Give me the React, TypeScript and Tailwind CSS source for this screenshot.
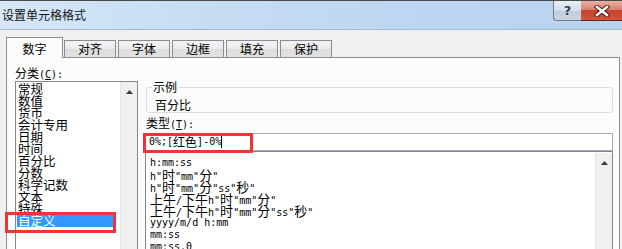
import React from "react";

const isCJK = (c: string) => /[\u2E80-\u9FFF\uFF00-\uFFEF\u3000-\u303F]/.test(c);

function Mixed({ text, cjk }: { text: string; cjk: string }) {
  const parts: { t: string; c: boolean }[] = [];
  for (const ch of Array.from(text)) {
    const c = isCJK(ch);
    const last = parts[parts.length - 1];
    if (last && last.c === c) last.t += ch;
    else parts.push({ t: ch, c });
  }
  return (
    <>
      {parts.map((p, i) =>
        p.c ? (
          <span key={i} className={cjk}>
            {p.t}
          </span>
        ) : (
          <span key={i}>{p.t}</span>
        )
      )}
    </>
  );
}

function UpArrow() {
  return (
    <svg width="7" height="4" viewBox="0 0 7 4">
      <path d="M0 4 L3.5 0 L7 4 Z" fill="#3a3a3a" />
    </svg>
  );
}

const categories = [
  "常规",
  "数值",
  "货币",
  "会计专用",
  "日期",
  "时间",
  "百分比",
  "分数",
  "科学记数",
  "文本",
  "特殊",
  "自定义",
];

const formats = [
  "h:mm:ss",
  'h"时"mm"分"',
  'h"时"mm"分"ss"秒"',
  '上午/下午h"时"mm"分"',
  '上午/下午h"时"mm"分"ss"秒"',
  "yyyy/m/d h:mm",
  "mm:ss",
  "mm:ss.0",
];

const tabs = ["对齐", "字体", "边框", "填充", "保护"];

export default function App() {
  return (
    <div className="w-[622px] h-[249px] overflow-hidden bg-[#f0f0f0] relative font-['Noto_Sans_CJK_SC',sans-serif] text-black">
      {/* Title bar */}
      <div className="h-[30px] flex border-t border-t-[#4a4a4a] border-b border-b-[#a9b9cc] bg-[linear-gradient(to_right,#d5e7f9,#c6dcf3_35%,#bdd6f1_65%,#b8d3f0)]">
        <div className="pl-[2px] pt-[6px] text-[12px] leading-[16px] text-[#151515]">
          设置单元格格式
        </div>
        <div className="ml-auto flex self-start">
          <div className="w-[28px] h-[20px] border-l border-b border-[#6f7c8c] rounded-bl-[4px] bg-[linear-gradient(to_bottom,#e8eff8,#d3deea_50%,#c0cddc_51%,#c9d5e3)] flex items-center justify-center">
            <span className="font-['DejaVu_Sans',sans-serif] font-bold text-[13px] leading-[14px] text-[#2e3b4b] [text-shadow:0_0_1px_#fff]">
              ?
            </span>
          </div>
          <div className="w-[41px] h-[20px] border-b border-[#6b2217] bg-[linear-gradient(to_bottom,#eab0a4,#dc8270_45%,#c8432e_50%,#d1543c)] flex items-center justify-center">
            <svg width="16" height="12" viewBox="0 0 16 12">
              <path d="M3 2 L13 10 M13 2 L3 10" stroke="#4a1a12" strokeWidth="4.5" strokeLinecap="square" />
              <path d="M3 2 L13 10 M13 2 L3 10" stroke="#ffffff" strokeWidth="2.5" strokeLinecap="square" />
            </svg>
          </div>
        </div>
      </div>

      {/* Tabs */}
      <div className="ml-[6px] mt-[7px] flex items-end h-[20px]">
        <div className="w-[57px] h-[21px] -mb-px relative z-10 border border-b-0 border-[#898c95] bg-[#fcfcfc] flex justify-center pt-[4px] text-[12px] leading-[14px]">
          数字
        </div>
        <div className="flex gap-[2px] ml-px">
          {tabs.map((t) => (
            <div
              key={t}
              className="w-[52px] h-[17px] border border-b-0 border-[#898c95] bg-[linear-gradient(to_bottom,#f3f3f3,#ebebeb_50%,#dddddd_51%,#e2e2e2)] flex justify-center pt-px text-[12px] leading-[14px]"
            >
              {t}
            </div>
          ))}
        </div>
      </div>

      {/* Panel */}
      <div className="ml-[6px] w-[614px] h-[200px] border border-[#898c95] bg-[#fcfcfc] flex pl-[8px] pt-[8px]">
        {/* Left column */}
        <div className="w-[123px] flex flex-col">
          <div className="h-[14px] text-[12px] leading-[14px] whitespace-nowrap">
            分类
            <span className="font-['DejaVu_Sans_Mono',monospace] text-[10px]">
              (<span className="underline">C</span>):
            </span>
          </div>
          <div className="mt-px h-[200px] border border-[#828790] bg-white flex">
            <div className="flex-1 pt-px pl-px">
              {categories.map((c) =>
                c === "自定义" ? (
                  <div
                    key={c}
                    className="w-[97px] h-[12px] leading-[12px] pl-px text-[12.5px] bg-[#3399ff] text-white whitespace-nowrap"
                  >
                    {c}
                  </div>
                ) : (
                  <div key={c} className="h-[12px] leading-[12px] pl-px text-[12.5px] whitespace-nowrap">
                    {c}
                  </div>
                )
              )}
            </div>
            <div className="w-[17px] bg-[#f0f0f0] border-l border-[#e6e6e6] flex justify-center pt-[8px]">
              <div className="h-[4px]">
                <UpArrow />
              </div>
            </div>
          </div>
        </div>

        {/* Right column */}
        <div className="ml-[7px] w-[468px] flex flex-col">
          <div className="relative mt-[21px] ml-px h-[28px] border border-[#d5dfe5] rounded-[3px]">
            <div className="absolute left-[5px] -top-[8px] px-px bg-[#fcfcfc] text-[12px] leading-[14px]">
              示例
            </div>
            <div className="pl-[8px] pt-[10px] text-[12px] leading-[14px]">百分比</div>
          </div>
          <div className="mt-[3px] ml-px h-[14px] text-[12px] leading-[14px] whitespace-nowrap">
            类型
            <span className="font-['DejaVu_Sans_Mono',monospace] text-[10px]">
              (<span className="underline">T</span>):
            </span>
          </div>
          <div className="mt-[3px] h-[18px] border border-[#abadb3] bg-white pl-[3px] flex items-center font-['DejaVu_Sans_Mono','Noto_Sans_CJK_SC',monospace] text-[10px] leading-[16px] whitespace-nowrap">
            <Mixed text="0%;[红色]-0%" cjk="font-['Noto_Sans_CJK_SC',sans-serif] text-[12px]" />
            <span className="inline-block w-px h-[12px] bg-black" />
          </div>
          <div className="h-[150px] border border-[#828790] bg-white flex">
            <div className="flex-1 pl-[4px] pt-[5px] font-['DejaVu_Sans_Mono','Noto_Sans_CJK_SC',monospace] text-[10px]">
              {formats.map((f) => (
                <div key={f} className="h-[12px] leading-[12px] whitespace-nowrap">
                  <Mixed text={f} cjk="font-['Noto_Sans_CJK_SC',sans-serif] text-[13px]" />
                </div>
              ))}
            </div>
            <div className="w-[17px] mt-px bg-[#f0f0f0] border-l border-[#e6e6e6] flex justify-center pt-[8px]">
              <div className="h-[4px]">
                <UpArrow />
              </div>
            </div>
          </div>
        </div>
      </div>

      {/* Annotation boxes */}
      <div className="absolute left-[5px] top-[212px] w-[111px] h-[21px] border-[3px] border-[#ee3434]" />
      <div className="absolute left-[143px] top-[133px] w-[110px] h-[20px] border-[3px] border-[#ee3434]" />
    </div>
  );
}
